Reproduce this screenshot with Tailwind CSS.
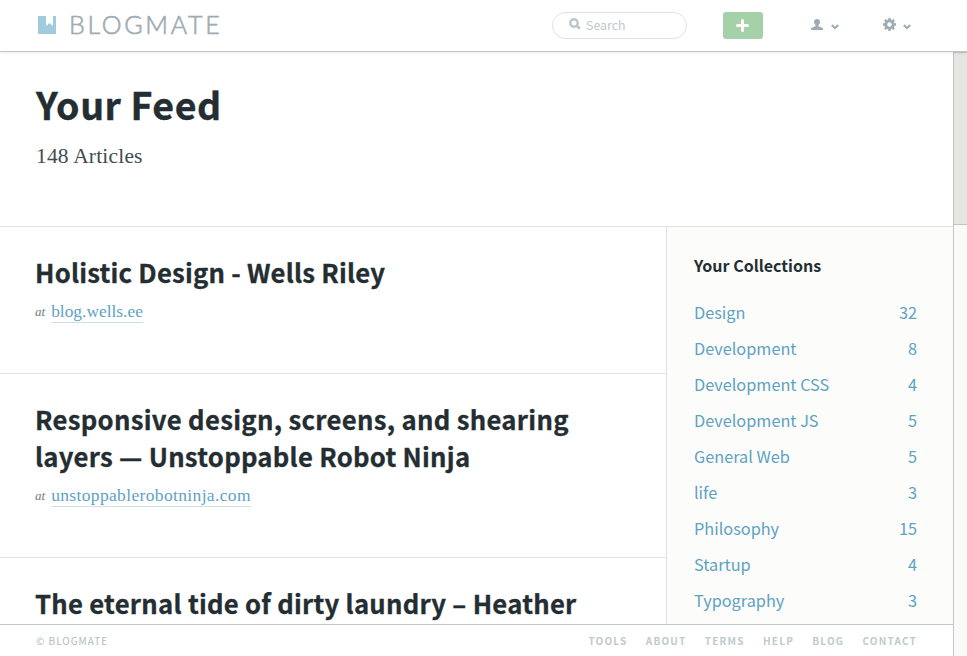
<!DOCTYPE html>
<html lang="en">
<head>
<meta charset="utf-8">
<title>Blogmate</title>
<script src="https://cdn.jsdelivr.net/npm/@tailwindcss/browser@4"></script>
</head>
<body class="flex h-[656px] w-[967px] flex-col overflow-hidden bg-white font-['Noto_Sans_CJK_SC',sans-serif] text-[#242e32]">
  <header class="z-10 flex h-[52px] shrink-0 items-start border-b border-[#bfc5c8] bg-white pl-[38px] shadow-[0_1px_3px_rgba(0,0,0,0.08)]">
    <svg class="mt-4 h-[18px] w-[18px]" viewBox="0 0 18 18" fill="#a2cadd"><path d="M0 0H8V10L11.5 7L15 10V0H18V18H0Z"/></svg>
    <span class="ml-[13px] mt-1 block w-[161px] whitespace-nowrap font-['Lato',sans-serif] text-[25px] font-light leading-[40px] tracking-[2.7px] text-[#9eabb1] [-webkit-text-stroke:0.6px_#9eabb1]">BLOGMATE</span>
    <div class="ml-[322px] mt-3 flex h-[27px] w-[135px] items-center rounded-full border border-[#dfe2e2] pl-[15.5px]">
      <svg class="mb-[3px] h-3 w-3" viewBox="0 0 12 12" fill="none" stroke="#bcc6ca"><circle cx="5" cy="5" r="3.7" stroke-width="2.4"/><path d="M7.8 7.8L10.8 10.8" stroke-width="2.8"/></svg>
      <span class="ml-[5.5px] mt-[-2px] text-[12.4px] leading-5 text-[#c0c9cc]">Search</span>
    </div>
    <div class="ml-9 mt-3 flex h-[27px] w-10 items-center justify-center rounded-[3px] bg-[#a5d1a8]">
      <svg class="mr-px h-[13px] w-[13px]" viewBox="0 0 13 13" stroke="#fff" stroke-width="3" stroke-linecap="round"><path d="M6.5 1.5V11.5M1.5 6.5H11.5"/></svg>
    </div>
    <svg class="ml-[48px] mt-[19px] h-[11px] w-3" viewBox="0 0 12 11" fill="#9eabb1"><path d="M6 0C7.9 0 9 1.1 9 2.8C9 4.3 8.4 5.3 7.5 6V7.2C9 8 12 8.5 12 10V11H0V10C0 8.5 3 8 4.5 7.2V6C3.6 5.3 3 4.3 3 2.8C3 1.1 4.1 0 6 0Z"/></svg>
    <svg class="ml-[8px] mt-6 h-[6px] w-[8px]" viewBox="0 0 8 6" fill="none" stroke="#9eabb1" stroke-width="2"><path d="M.8 1L4 4.2L7.2 1"/></svg>
    <svg class="ml-[44px] mt-[18px] h-[13px] w-[13px]" viewBox="0 0 13 13" fill="none" stroke="#9eabb1"><circle cx="6.5" cy="6.5" r="3.7" stroke-width="2.8"/><path stroke-width="2.4" d="M6.5 0V2.2M6.5 10.8V13M0 6.5H2.2M10.8 6.5H13M1.9 1.9L3.4 3.4M9.6 9.6L11.1 11.1M11.1 1.9L9.6 3.4M3.4 9.6L1.9 11.1"/></svg>
    <svg class="ml-[7px] mt-6 h-[6px] w-[8px]" viewBox="0 0 8 6" fill="none" stroke="#9eabb1" stroke-width="2"><path d="M.8 1L4 4.2L7.2 1"/></svg>
  </header>
  <div class="flex min-h-0 flex-1">
    <div class="flex w-[953px] flex-col">
      <section class="h-[175px] shrink-0 border-b border-[#e0e2e1] pl-9 pt-[30px]">
        <h1 class="text-[37.5px] font-bold leading-[44px] tracking-[0.55px] [-webkit-text-stroke:0.4px_#242e32]">Your Feed</h1>
        <p class="mt-[17px] font-['Liberation_Serif',serif] text-[21.5px] leading-[26px] tracking-[0.18px] text-[#414b50]">148 Articles</p>
      </section>
      <div class="flex min-h-0 flex-1">
        <main class="w-[666px] overflow-hidden">
          <article class="border-b border-[#e0e2e1] pb-[50px] pl-[35px] pt-[26px]">
            <h2 class="text-[25.7px] font-bold leading-[37px] tracking-[0.2px] [-webkit-text-stroke:0.3px_#242e32]">Holistic Design - Wells Riley</h2>
            <p class="mt-[9px] flex h-6 items-start font-['Liberation_Serif',serif] leading-[23px]"><em class="mr-[6px] pt-px text-[13px] text-[#747d80]">at</em><a class="border-b border-[#cfe0e8] text-[17.4px] text-[#5ea2c3]"><span class="relative top-px">blog.wells.ee</span></a></p>
          </article>
          <article class="border-b border-[#e0e2e1] pb-[50px] pl-[35px] pt-[26px]">
            <h2 class="text-[25.7px] font-bold leading-[37px] tracking-[0.3px] [-webkit-text-stroke:0.3px_#242e32]">Responsive design, screens, and shearing<br><span class="tracking-[0.25px]">layers — Unstoppable Robot Ninja</span></h2>
            <p class="mt-[9px] flex h-6 items-start font-['Liberation_Serif',serif] leading-[23px]"><em class="mr-[6px] pt-px text-[13px] text-[#747d80]">at</em><a class="border-b border-[#cfe0e8] text-[17.5px] tracking-[0.35px] text-[#5ea2c3]"><span class="relative top-px">unstoppablerobotninja.com</span></a></p>
          </article>
          <article class="pl-[35px] pt-[26px]">
            <h2 class="text-[25.7px] font-bold leading-[37px] tracking-[0.25px] [-webkit-text-stroke:0.3px_#242e32]">The eternal tide of dirty laundry – Heather</h2>
          </article>
        </main>
        <aside class="flex-1 overflow-hidden border-l border-[#e0e2e1] bg-[#fcfcfa] pl-[27px] pr-[36px] pt-6">
          <h3 class="text-[16px] font-bold leading-7">Your Collections</h3>
          <ul class="mt-[15px] text-[16.3px] leading-9 text-[#5ea2c3]">
            <li class="flex justify-between"><span>Design</span><span>32</span></li>
            <li class="flex justify-between"><span>Development</span><span>8</span></li>
            <li class="flex justify-between"><span>Development CSS</span><span>4</span></li>
            <li class="flex justify-between"><span>Development JS</span><span>5</span></li>
            <li class="flex justify-between"><span>General Web</span><span>5</span></li>
            <li class="flex justify-between"><span>life</span><span>3</span></li>
            <li class="flex justify-between"><span>Philosophy</span><span>15</span></li>
            <li class="flex justify-between"><span>Startup</span><span>4</span></li>
            <li class="flex justify-between"><span>Typography</span><span>3</span></li>
          </ul>
        </aside>
      </div>
      <footer class="flex h-8 shrink-0 items-center justify-between border-t border-[#bfc8cb] bg-white pl-9 pr-[36px] text-[10px] leading-4 text-[#b0bbbf]">
        <span class="tracking-[1px]">© BLOGMATE</span>
        <nav class="flex gap-[18.3px] font-bold tracking-[1.2px] text-[#c0c9cc]"><a>TOOLS</a><a>ABOUT</a><a>TERMS</a><a>HELP</a><a>BLOG</a><a>CONTACT</a></nav>
      </footer>
    </div>
    <div class="w-[14px] border-l border-[#bfc5c8] bg-[#fafaf9]"><div class="h-[173px] border-y border-[#bfc5c8] bg-[#e5e6e1]"></div></div>
  </div>
</body>
</html>
